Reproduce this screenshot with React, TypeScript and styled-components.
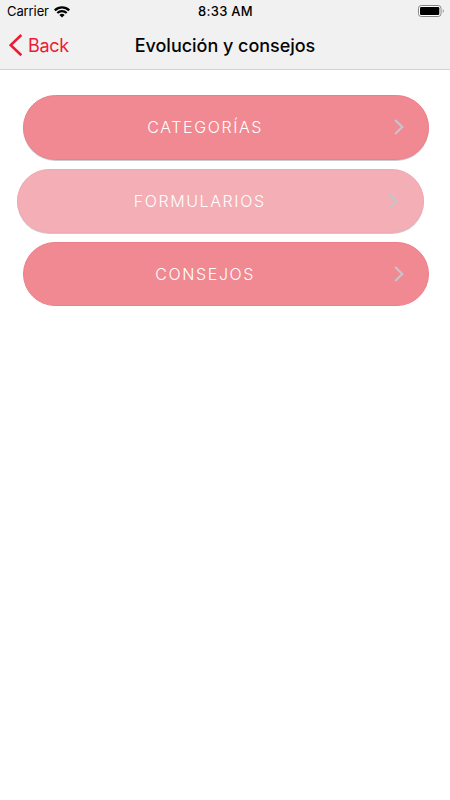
import React from "react";
import styled, { createGlobalStyle } from "styled-components";

const GlobalStyle = createGlobalStyle`
  * { box-sizing: border-box; }
  body { margin: 0; background: #fff; font-family: Inter, "Liberation Sans", sans-serif; }
`;

const Screen = styled.div`
  display: flex;
  flex-direction: column;
  width: 450px;
  height: 800px;
  background: #fff;
  overflow: hidden;
`;

const Header = styled.header`
  height: 70px;
  background: #f1f1f1;
  border-bottom: 1px solid #d3d3d5;
`;

const StatusBar = styled.div`
  display: grid;
  grid-template-columns: 1fr auto 1fr;
  align-items: center;
  height: 23px;
  padding: 0 6px 0 7px;
  font-size: 13px;
  line-height: 23px;
  color: #000;
`;

const Carrier = styled.div`
  display: flex;
  align-items: center;
  gap: 5px;
  font-weight: 400;
  letter-spacing: -0.1px;
`;

const Clock = styled.div`
  font-weight: 500;
  letter-spacing: 0.3px;
`;

const BatterySlot = styled.div`
  display: flex;
  justify-content: flex-end;
  margin-top: -1px;
`;

const NavBar = styled.nav`
  display: grid;
  grid-template-columns: 1fr auto 1fr;
  align-items: center;
  height: 45px;
  padding: 0 9px;
`;

const BackButton = styled.button`
  display: flex;
  align-items: center;
  gap: 5px;
  padding: 0;
  border: 0;
  background: none;
  color: #ec1b34;
  font: 400 18px Inter, sans-serif;
  letter-spacing: -0.3px;
`;

const Title = styled.h1`
  margin: 0;
  font-size: 18px;
  font-weight: 500;
  line-height: 24px;
  letter-spacing: -0.03px;
  color: #050505;
`;

const List = styled.main`
  display: flex;
  flex-direction: column;
  gap: 9px;
  padding: 25.4px 0 0 22.7px;
`;

const Option = styled.button<{ $pressed?: boolean; $shadow?: boolean }>`
  display: flex;
  align-items: center;
  width: 406.5px;
  height: 64.2px;
  margin: 0 0 0 ${(p) => (p.$pressed ? "-5.5px" : "0")};
  padding: 0 24.5px 0 0;
  border: 1px solid ${(p) => (p.$pressed ? "#f5a8b1" : "#ee7f89")};
  border-radius: 33px;
  background: ${(p) => (p.$pressed ? "#f4aeb6" : "#f08991")};
  box-shadow: ${(p) => (p.$shadow ? "0 1px 0 #cccbd0" : "none")};
  color: #fff;
`;

const OptionLabel = styled.span`
  flex: 1;
  padding-right: 7px;
  text-align: center;
  font: 300 16px/20px Inter, sans-serif;
  letter-spacing: 1.6px;
`;

const WifiIcon = () => (
  <svg width="16" height="12" viewBox="0 0 16 12" fill="none">
    <path d="M.8 4.3a10.4 10.4 0 0 1 14.4 0" stroke="#000" strokeWidth="2.4" />
    <path d="M3.3 7a6.8 6.8 0 0 1 9.4 0" stroke="#000" strokeWidth="2.1" />
    <path d="M8 11.6 5.4 9a3.7 3.7 0 0 1 5.2 0Z" fill="#000" />
  </svg>
);

const BatteryIcon = () => (
  <svg width="26" height="12" viewBox="0 0 26 12">
    <rect x=".5" y=".5" width="22.5" height="11" rx="2.8" fill="#fff" stroke="#858587" />
    <rect x="2" y="2" width="19.3" height="8" rx="1.2" fill="#000" />
    <path d="M24.8 4.2v3.6c1.2-.6 1.2-3 0-3.6Z" fill="#777" />
  </svg>
);

const BackIcon = () => (
  <svg width="14" height="23" viewBox="0 0 14 23" fill="none">
    <path d="M12.3 1 1.8 11.1 12.3 21.2" stroke="#ec1b34" strokeWidth="2.6" />
  </svg>
);

const ChevronIcon = () => (
  <svg width="10" height="16" viewBox="0 0 10 16" fill="none">
    <path d="m1.1 1 7.2 7-7.2 7" stroke="#c6c5ca" strokeWidth="2.2" />
  </svg>
);

const options = [
  { label: "CATEGORÍAS", shadow: true },
  { label: "FORMULARIOS", pressed: true, shadow: true },
  { label: "CONSEJOS" },
];

export default function App() {
  return (
    <Screen>
      <GlobalStyle />
      <Header>
        <StatusBar>
          <Carrier>Carrier <WifiIcon /></Carrier>
          <Clock>8:33 AM</Clock>
          <BatterySlot><BatteryIcon /></BatterySlot>
        </StatusBar>
        <NavBar>
          <BackButton><BackIcon />Back</BackButton>
          <Title>Evolución y consejos</Title>
        </NavBar>
      </Header>
      <List>
        {options.map((o) => (
          <Option key={o.label} $pressed={o.pressed} $shadow={o.shadow}>
            <OptionLabel>{o.label}</OptionLabel>
            <ChevronIcon />
          </Option>
        ))}
      </List>
    </Screen>
  );
}
